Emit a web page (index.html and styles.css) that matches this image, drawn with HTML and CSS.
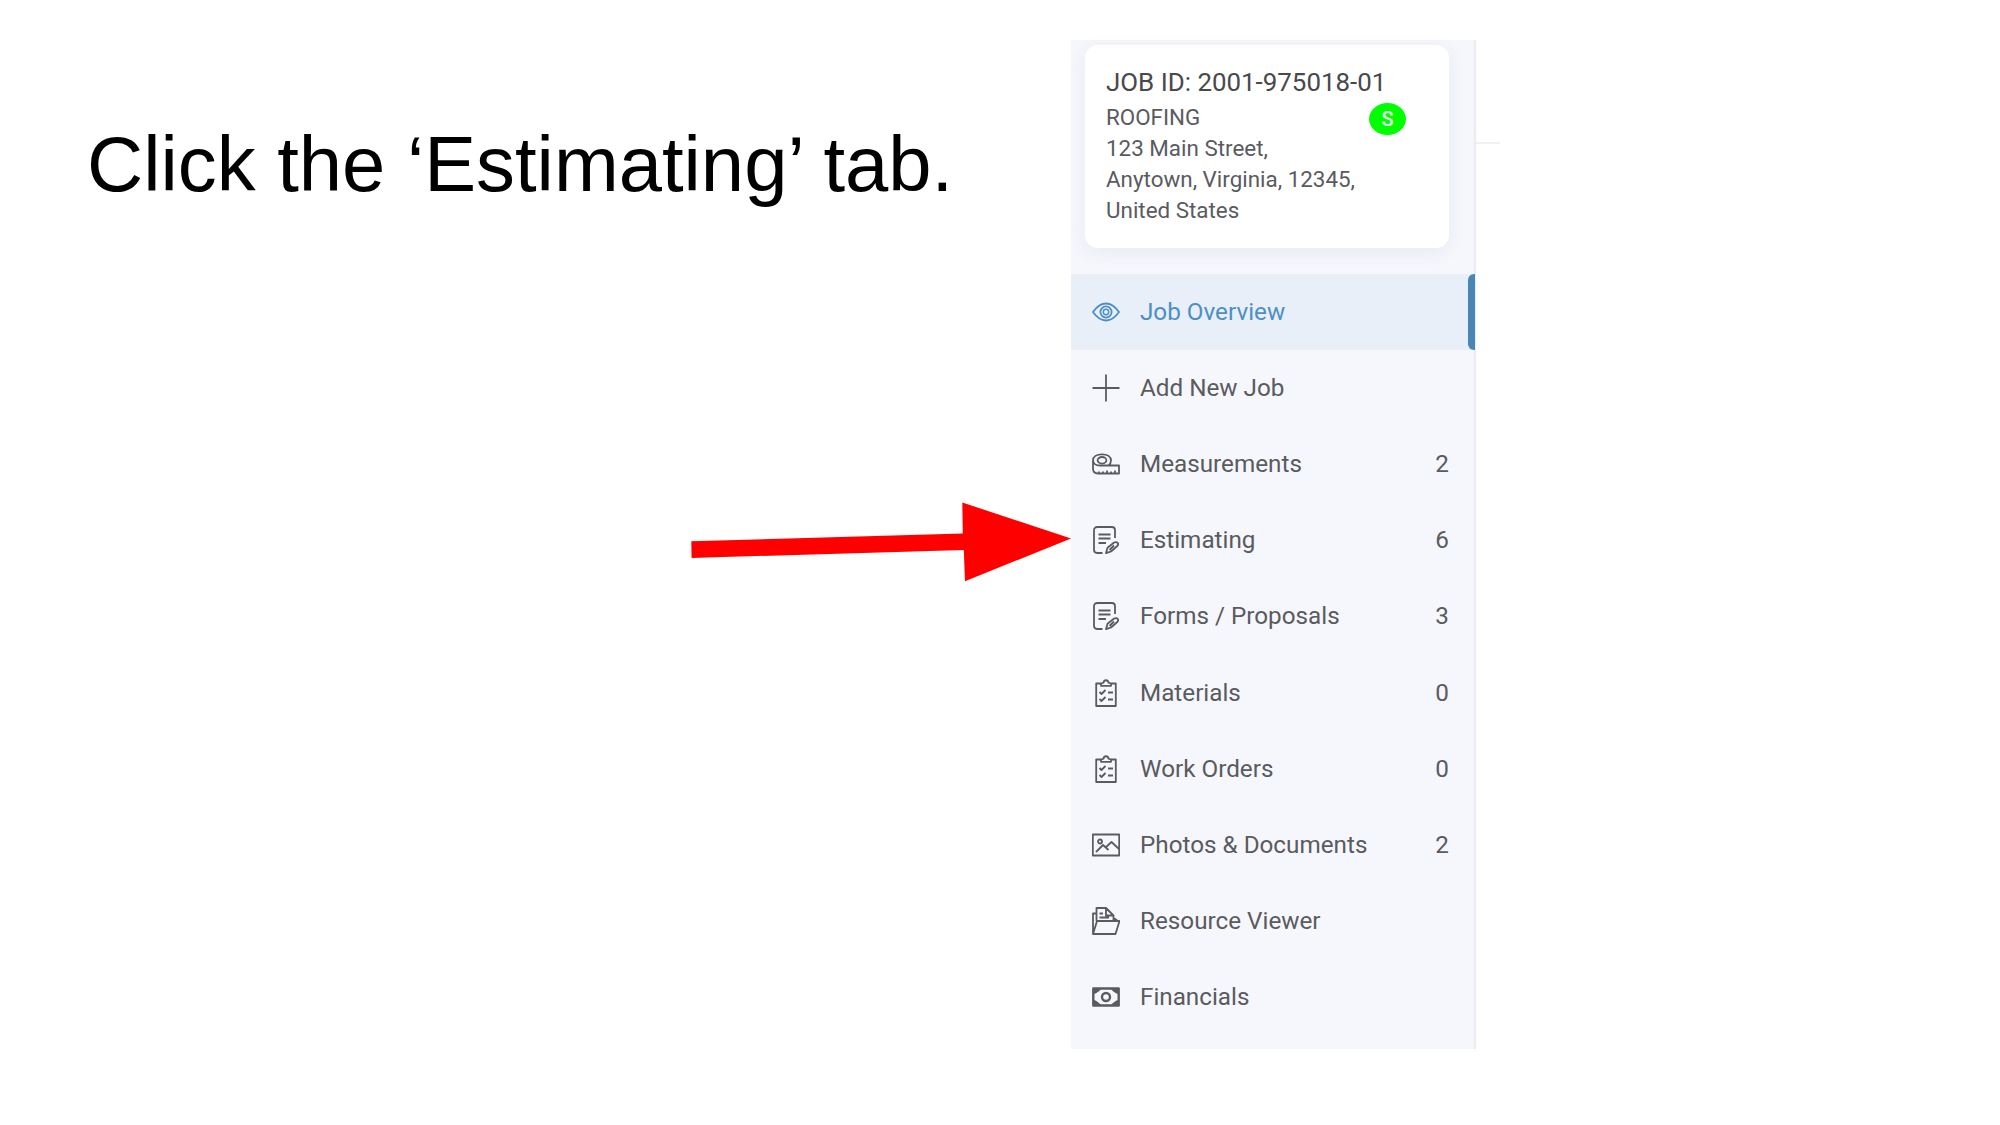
FILE: index.html
```html
<!DOCTYPE html>
<html lang="en">
<head>
<meta charset="utf-8">
<title>Click the Estimating tab</title>
<link rel="stylesheet" href="styles.css">
</head>
<body>
<svg class="defs" width="0" height="0" aria-hidden="true">
  <symbol id="form" viewBox="0 0 28 28"><path d="M10.500 27H5.200a3.200 3.200 0 0 1-3.200-3.200V4.200A3.200 3.200 0 0 1 5.200 1h14.600A3.200 3.200 0 0 1 23 4.200V12M6.500 8.500h12M6.500 12.500h12M6.500 17h7.500"/><path d="M14 27.200l1.500-5.500 6.300-5q2.500-1.200 4 .3.900 1.400-.5 3l-6.300 5.500zM17.500 24l4.500-4.500"/></symbol>
  <symbol id="clipboard" viewBox="0 0 28 28"><path d="M9 4.500H4.200v22.500h19.600V4.500H19M9 6.800V4.500l2.500-.8C12 .4 16 .4 16.500 3.700l2.500.8v2.300z"/><path d="M7.500 13l2 2 4-4M7.500 20l2 2 4-4M16 13.500h5M16 20.500h5"/></symbol>
</svg>
<main class="slide">
  <h1 class="title">Click the ‘Estimating’ tab.</h1>
  <aside class="panel">
    <section class="card">
      <h2 class="job-id">JOB ID: 2001-975018-01</h2>
      <div class="details">
        <address class="address">ROOFING<br>123 Main Street,<br>Anytown, Virginia, 12345,<br>United States</address>
        <span class="status">S</span>
      </div>
    </section>
    <nav class="menu">
      <a class="item active"><svg class="icon" viewBox="0 0 28 28"><path d="M1 14Q7 5.500 14 5.500t13 8.500q-6 8.500-13 8.500T1 14z"/><circle cx="14" cy="14" r="5.600"/><circle class="fine" cx="14" cy="14" r="2.700"/></svg><span class="label">Job Overview</span></a>
      <a class="item"><svg class="icon" viewBox="0 0 28 28"><path d="M14 .5v27M.5 14h27"/></svg><span class="label">Add New Job</span></a>
      <a class="item"><svg class="icon" viewBox="0 0 28 28"><path d="M1 10.500v8q0 5 5 5h21v-8H8M1 10.500C1 6.500 4.500 4.300 10 4.300s9 2.200 9 6.200q0 3-2.500 5M1 10.500q.500 5 7 5M7 23.500v-2M11 23.500v-2M15 23.500v-3M19 23.500v-2M23 23.500v-3"/><ellipse cx="10" cy="10.300" rx="4.400" ry="3.300"/></svg><span class="label">Measurements</span><span class="count">2</span></a>
      <a class="item"><svg class="icon"><use href="#form"/></svg><span class="label">Estimating</span><span class="count">6</span></a>
      <a class="item"><svg class="icon"><use href="#form"/></svg><span class="label">Forms / Proposals</span><span class="count">3</span></a>
      <a class="item"><svg class="icon"><use href="#clipboard"/></svg><span class="label">Materials</span><span class="count">0</span></a>
      <a class="item"><svg class="icon"><use href="#clipboard"/></svg><span class="label">Work Orders</span><span class="count">0</span></a>
      <a class="item"><svg class="icon" viewBox="0 0 28 28"><path d="M.8 3.500h26.400v21H.8z"/><circle cx="8" cy="10.500" r="2"/><path d="M4 21l7-7 5.500 5M13.500 16.500l6-5.500 7.500 7"/></svg><span class="label">Photos &amp; Documents</span><span class="count">2</span></a>
      <a class="item"><svg class="icon" viewBox="0 0 28 28"><path d="M1 27l4-13h22.500l-4 13zM1 27V6.500h3.500M4.500 14V1H14l7.500 7.500V14M14 1v7.500h7.500M21.500 10.500l4 3.500M7.500 6.500H11M7.500 10.500H17"/></svg><span class="label">Resource Viewer</span></a>
      <a class="item"><svg class="icon" viewBox="0 0 28 28"><path class="bold" d="M1.300 5.500h25.400v17H1.300z"/><circle class="bold" cx="14" cy="14" r="4"/><path class="solid" d="M1 5h8.500Q7.500 9 1 11.500zM27 5h-8.500q2 4 8.500 6.500zM1 23h8.500Q7.500 19 1 16.500zM27 23h-8.500q2-4 8.500-6.500z"/></svg><span class="label">Financials</span></a>
    </nav>
  </aside>
  <div class="divider"></div>
  <svg class="arrow" viewBox="0 0 380 80"><path d="M.3 39.300L271.800 31.500 271.300.500 380 36.500 274 79.200 272.800 48 .6 56z"/></svg>
</main>
</body>
</html>
```
FILE: styles.css
```css
* { box-sizing: border-box; }

body {
  margin: 0;
  background: #fff;
}

.defs { position: absolute; }

.slide {
  position: relative;
  display: grid;
  grid-template-columns: 983px 405px 24px;
  align-items: start;
  width: 2000px;
  height: 1125px;
  padding: 40px 0 0 88px;
  overflow: hidden;
}

.title {
  margin: 79px 0 0 -1px;
  font: 400 77.8px/90px "Liberation Sans", Arial, sans-serif;
  color: #000;
  white-space: nowrap;
}

.panel {
  height: 1009px;
  padding-top: 5px;
  background: #f6f7fc;
  border-right: 2px solid #ebecef;
  font-family: Roboto, sans-serif;
  color: #5a5b5f;
}

.card {
  width: 364px;
  height: 203px;
  margin-left: 14px;
  padding: 19px 21px 0;
  background: #fff;
  border-radius: 13px;
  box-shadow: 0 4px 18px rgba(60, 80, 150, .08);
}

.job-id {
  margin: 0 0 1px;
  font-size: 25.9px;
  font-weight: 400;
  line-height: 37px;
  color: #48494c;
  white-space: nowrap;
}

.details {
  display: flex;
  justify-content: space-between;
}

.address {
  font-size: 22.4px;
  font-style: normal;
  line-height: 31.1px;
  white-space: nowrap;
}

.status {
  width: 37px;
  height: 32px;
  margin: 1px 22px 0 0;
  border-radius: 50%;
  background: #0f0;
  color: #e8ffe8;
  font-size: 20px;
  font-weight: 500;
  line-height: 32px;
  text-align: center;
}

.menu {
  display: grid;
  grid-auto-rows: 76.2px;
  margin-top: 25.500px;
}

.item {
  display: flex;
  align-items: center;
  padding: 0 25px 0 20.700px;
  font-size: 24.25px;
}

.active {
  margin-right: -1px;
  padding-right: 0;
  background: #e8eff9;
  color: #4d8fc4;
}

.active::after {
  content: "";
  width: 7px;
  height: 100%;
  background: #4886b8;
  border-radius: 6px 0 0 6px;
}

.icon {
  width: 28px;
  height: 28px;
  margin-right: 20.300px;
  fill: none;
  stroke: currentColor;
  stroke-width: 1.8;
  stroke-linejoin: round;
}

.bold { stroke-width: 2.4; }

.fine { stroke-width: 1.4; }

.solid {
  fill: currentColor;
  stroke: none;
}

.label {
  flex: 1;
  white-space: nowrap;
}

.divider {
  height: 2px;
  margin-top: 102px;
  background: #f1f1f3;
}

/* The pointer lies over the slide, its tip on the Estimating row. */
.arrow {
  position: absolute;
  left: 691px;
  top: 502px;
  width: 380px;
  height: 80px;
  fill: #f00;
}
```
